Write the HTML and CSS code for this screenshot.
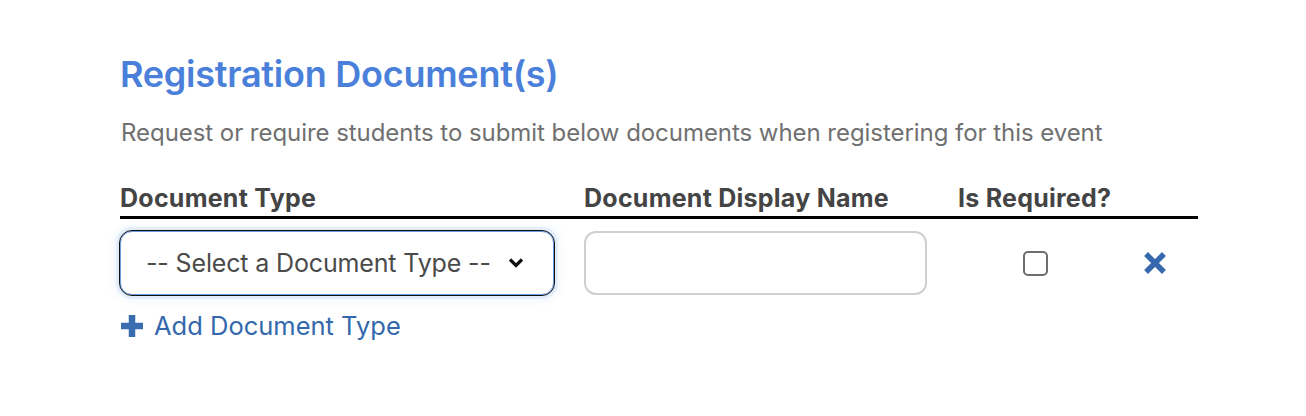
FILE: index.html
```html
<!DOCTYPE html>
<html lang="en">
<head>
<meta charset="utf-8">
<title>Registration Document(s)</title>
<link rel="stylesheet" href="styles.css">
</head>
<body>
<section class="docs">
  <h2 class="docs-title">Registration Document(s)</h2>
  <p class="docs-desc">Request or require students to submit below documents when registering for this event</p>
  <div class="docs-grid docs-head">
    <div class="head-cell">Document Type</div>
    <div class="head-cell">Document Display Name</div>
    <div class="head-cell">Is Required?</div>
    <div class="head-cell"></div>
  </div>
  <div class="docs-grid docs-row">
    <div class="select-box">
      <span class="select-text">-- Select a Document Type --</span>
      <svg class="chevron" width="16" height="12" viewBox="0 0 16 12"><path d="M2 2.5 L8 8.5 L14 2.5" fill="none" stroke="#111" stroke-width="3.2"/></svg>
    </div>
    <div class="text-input"></div>
    <div class="check-cell"><span class="checkbox"></span></div>
    <div class="remove-cell">
      <svg width="22" height="22" viewBox="0 0 22 22"><path d="M4 4 L18 18 M18 4 L4 18" stroke="#3668ad" stroke-width="5.5" stroke-linecap="square"/></svg>
    </div>
  </div>
  <a class="add-link" href="#">
    <svg width="22" height="22" viewBox="0 0 22 22"><path d="M11 0 V22 M0 11 H22" stroke="#3a6db0" stroke-width="6.5"/></svg>
    <span>Add Document Type</span>
  </a>
</section>
</body>
</html>
```
FILE: styles.css
```css
html, body {
  margin: 0;
  background: #fff;
}
body {
  font-family: Inter, "Open Sans", sans-serif;
}
.docs {
  padding: 52px 108px 0 120px;
}
.docs-title {
  margin: 0;
  font-size: 36px;
  line-height: 44px;
  font-weight: 600;
  color: #4a80d9;
  letter-spacing: -0.25px;
}
.docs-desc {
  margin: 22px 0 0 1px;
  font-size: 24px;
  line-height: 30px;
  color: #707070;
  letter-spacing: -0.05px;
}
.docs-grid {
  display: grid;
  grid-template-columns: 464px 374px 154px 86px;
}
.docs-head {
  margin-top: 35px;
  border-bottom: 3px solid #000;
  padding-bottom: 3px;
}
.head-cell {
  font-size: 25px;
  line-height: 30px;
  font-weight: 700;
  color: #444;
  letter-spacing: 0.25px;
}
.docs-row {
  margin-top: 12px;
  align-items: center;
}
.select-box {
  box-sizing: border-box;
  width: 434px;
  height: 64px;
  border: 1.5px solid #6a9ce6;
  outline: 1.5px solid #111;
  border-radius: 12px;
  box-shadow: 0 0 0 4px rgba(120, 170, 240, 0.14), 0 0 10px 5px rgba(120, 170, 240, 0.12);
  display: flex;
  align-items: center;
  justify-content: space-between;
  padding: 0 29px 0 25px;
  background: #fff;
}
.select-text {
  font-size: 25px;
  color: #4a4a4a;
  letter-spacing: -0.15px;
}
.chevron {
  display: block;
}
.text-input {
  box-sizing: border-box;
  width: 343px;
  height: 64px;
  border: 2px solid #cfcfcf;
  border-radius: 12px;
}
.check-cell, .remove-cell {
  display: flex;
  justify-content: center;
  align-items: center;
}
.checkbox {
  box-sizing: border-box;
  width: 25px;
  height: 25px;
  border: 2px solid #6e6e6e;
  border-radius: 5px;
}
.add-link {
  display: inline-flex;
  align-items: center;
  gap: 11px;
  margin-top: 16px;
  padding-left: 1px;
  color: #3368ad;
  text-decoration: none;
  font-size: 25.5px;
  line-height: 30px;
}
.add-link svg {
  display: block;
}
```
